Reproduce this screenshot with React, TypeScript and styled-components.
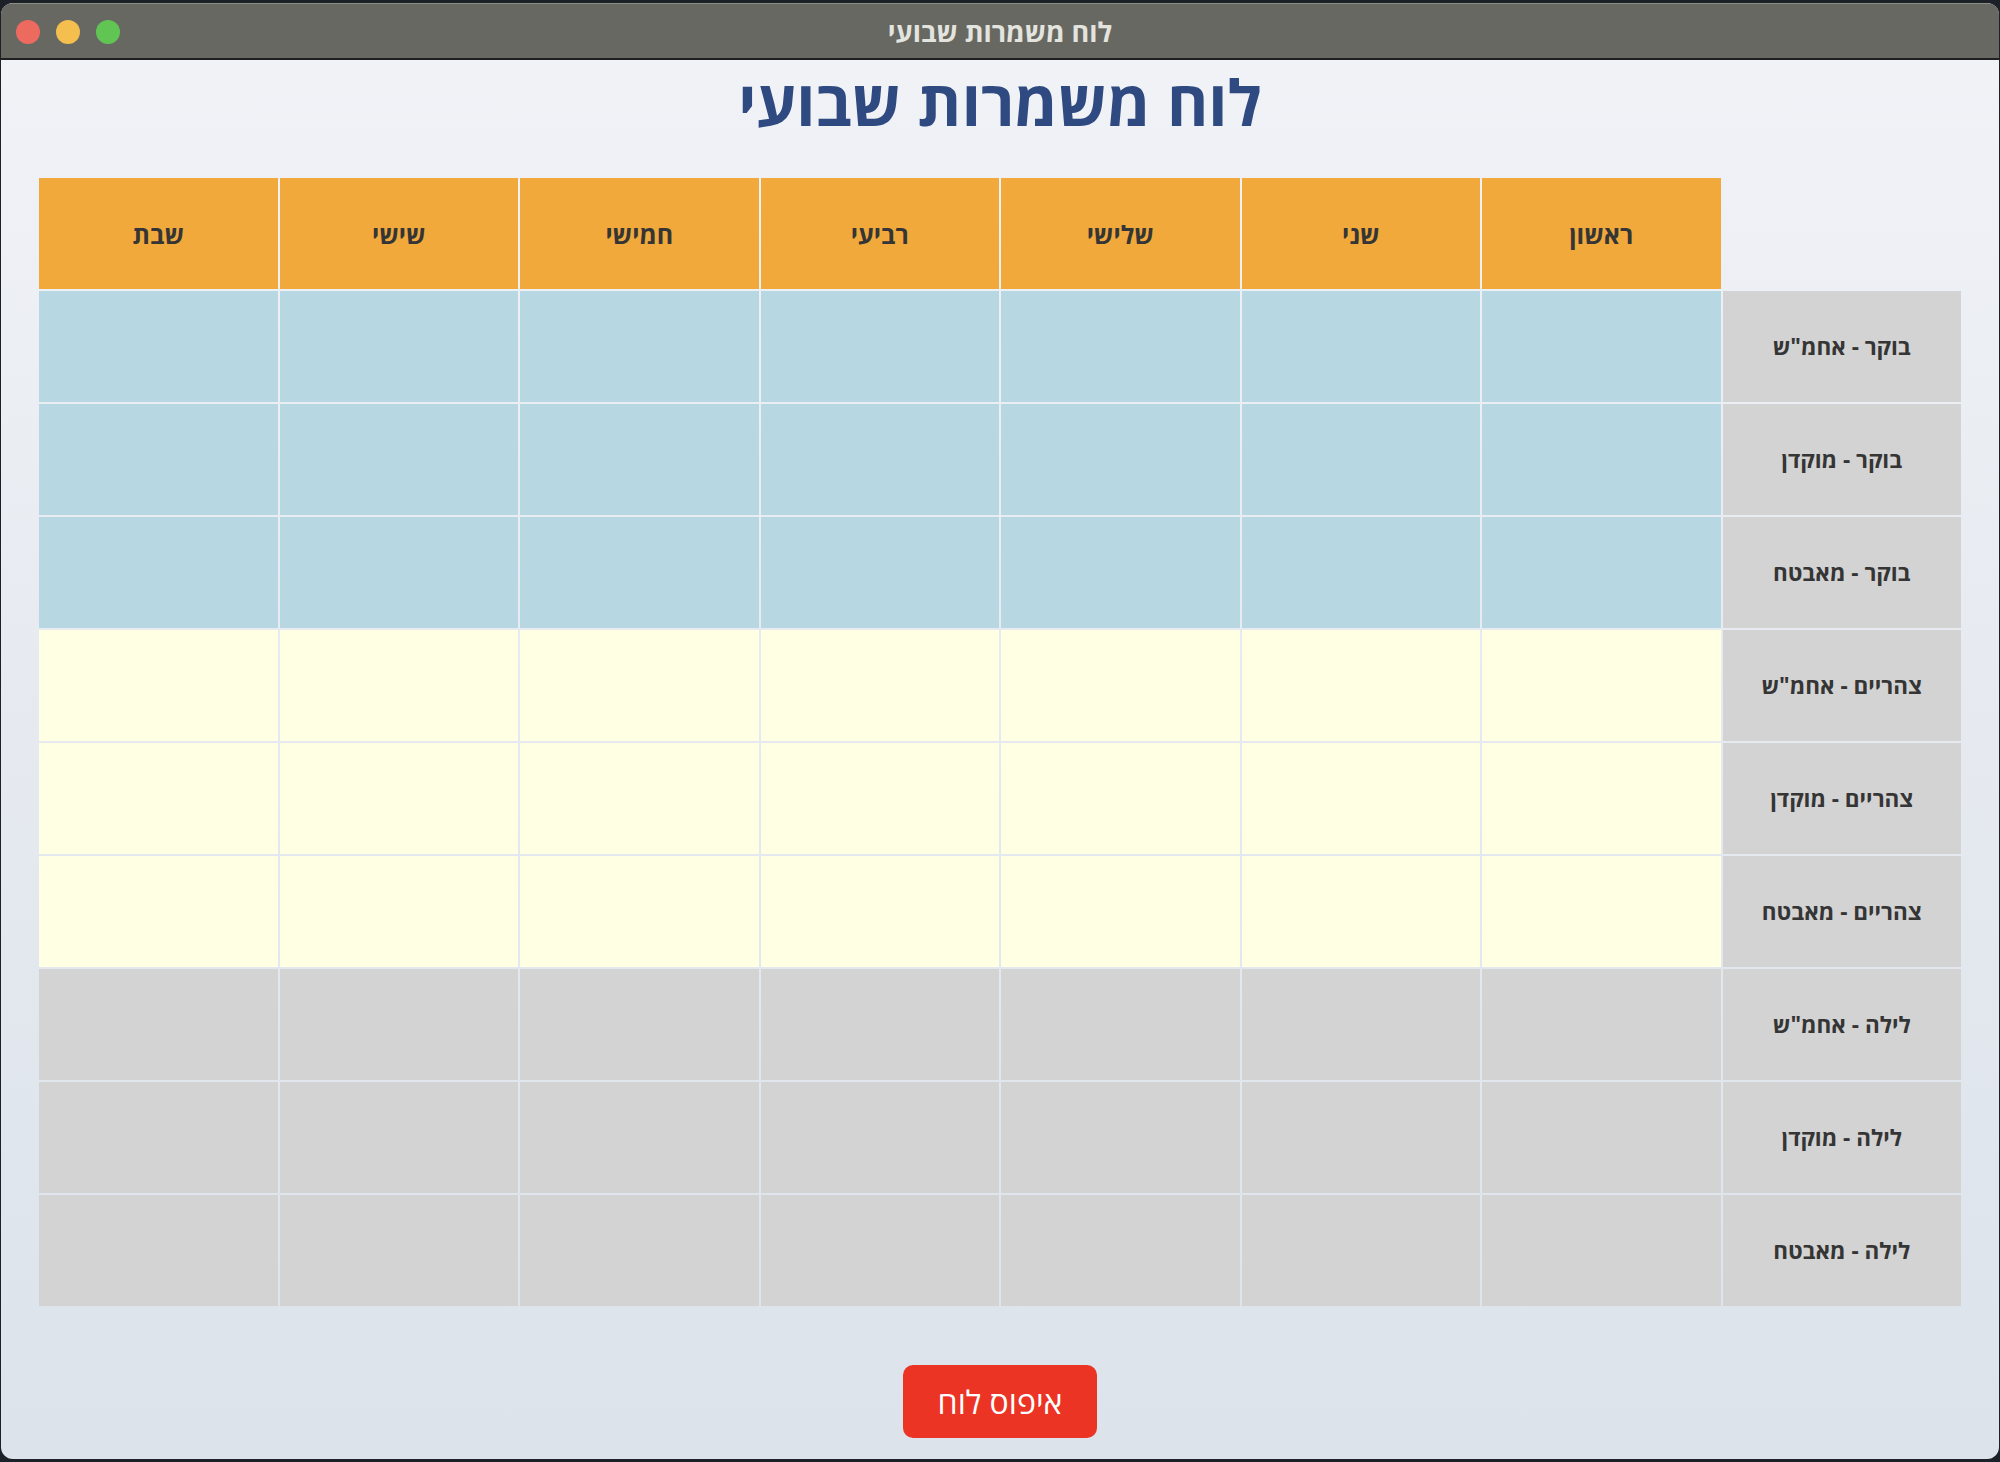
import React from "react";
import styled, { createGlobalStyle } from "styled-components";

const GlobalStyle = createGlobalStyle`
  html, body {
    margin: 0;
    padding: 0;
    background: #1c2027;
  }
  body {
    font-family: "Open Sans", "DejaVu Sans", sans-serif;
  }
`;

const Screen = styled.div`
  width: 2000px;
  height: 1462px;
  padding: 3px 1px 3px 1px;
  box-sizing: border-box;
  display: flex;
`;

const Window = styled.div`
  flex: 1;
  display: flex;
  flex-direction: column;
  border-radius: 12px;
  overflow: hidden;
  background: linear-gradient(180deg, #f1f3f7 0%, #e6eaf0 50%, #dce3eb 100%);
  box-shadow: inset 0 0 0 1px rgba(255, 255, 255, 0.08);
`;

const TitleBar = styled.div`
  height: 57px;
  flex: none;
  display: flex;
  align-items: center;
  position: relative;
  background: #686863;
  border-top: 1px solid #8d8d88;
  border-bottom: 2px solid #1f1f1f;
  box-sizing: border-box;
`;

const Lights = styled.div`
  display: flex;
  gap: 16px;
  padding-left: 15px;
  margin-top: 2px;
`;

const Light = styled.span<{ $c: string }>`
  width: 24px;
  height: 24px;
  border-radius: 50%;
  background: ${(p) => p.$c};
`;

const WindowTitle = styled.div`
  position: absolute;
  left: 0;
  right: 0;
  top: 0;
  bottom: 0;
  display: flex;
  align-items: center;
  justify-content: center;
  direction: rtl;
  color: #e4e4de;
  font-family: "Open Sans", sans-serif;
  font-weight: 700;
  font-size: 27px;
  pointer-events: none;
`;

const Content = styled.main`
  flex: 1;
  display: flex;
  flex-direction: column;
  align-items: center;
  padding: 0 38px;
  direction: rtl;
`;

const Heading = styled.h1`
  margin: 4px 0 0 0;
  height: 76px;
  line-height: 76px;
  font-family: "Open Sans", sans-serif;
  font-weight: 700;
  font-size: 63px;
  color: #2f4a80;
`;

const Grid = styled.div`
  margin-top: 38px;
  width: 1922px;
  display: grid;
  grid-template-columns: repeat(8, 1fr);
  grid-auto-rows: 111px;
  gap: 2px;
  direction: rtl;
`;

const Corner = styled.div``;

const DayCell = styled.div`
  background: #f1a93b;
  display: flex;
  align-items: center;
  justify-content: center;
  font-family: "Open Sans", sans-serif;
  font-weight: 700;
  font-size: 25px;
  color: #353535;
`;

const LabelCell = styled.div`
  background: #d3d3d3;
  display: flex;
  align-items: center;
  justify-content: center;
  font-family: "Open Sans", sans-serif;
  font-weight: 700;
  font-size: 22.5px;
  color: #353535;
  white-space: nowrap;
`;

const shiftColors: Record<string, string> = {
  morning: "#b7d8e3",
  noon: "#ffffe3",
  night: "#d3d3d3",
};

const SlotCell = styled.div<{ $shift: string }>`
  background: ${(p) => shiftColors[p.$shift]};
`;

const Footer = styled.div`
  margin-top: 59px;
  display: flex;
  justify-content: center;
`;

const ResetButton = styled.button`
  width: 194px;
  height: 73px;
  border: none;
  border-radius: 10px;
  background: #eb3424;
  color: #ffffff;
  font-family: "Open Sans", sans-serif;
  font-weight: 400;
  font-size: 32px;
  direction: rtl;
  cursor: pointer;
  padding: 0;
`;

const days = ["ראשון", "שני", "שלישי", "רביעי", "חמישי", "שישי", "שבת"];

const shifts: { key: string; name: string }[] = [
  { key: "morning", name: "בוקר" },
  { key: "noon", name: "צהריים" },
  { key: "night", name: "לילה" },
];

const roles = ["אחמ\"ש", "מוקדן", "מאבטח"];

export default function App() {
  return (
    <>
      <GlobalStyle />
      <Screen>
        <Window>
          <TitleBar>
            <Lights>
              <Light $c="#ed6a5e" />
              <Light $c="#f5bf4f" />
              <Light $c="#61c554" />
            </Lights>
            <WindowTitle>לוח משמרות שבועי</WindowTitle>
          </TitleBar>
          <Content>
            <Heading>לוח משמרות שבועי</Heading>
            <Grid>
              <Corner />
              {days.map((d) => (
                <DayCell key={d}>{d}</DayCell>
              ))}
              {shifts.map((s) =>
                roles.map((r) => (
                  <React.Fragment key={s.key + r}>
                    <LabelCell>{`${s.name} - ${r}`}</LabelCell>
                    {days.map((d) => (
                      <SlotCell key={d} $shift={s.key} />
                    ))}
                  </React.Fragment>
                ))
              )}
            </Grid>
            <Footer>
              <ResetButton>איפוס לוח</ResetButton>
            </Footer>
          </Content>
        </Window>
      </Screen>
    </>
  );
}
